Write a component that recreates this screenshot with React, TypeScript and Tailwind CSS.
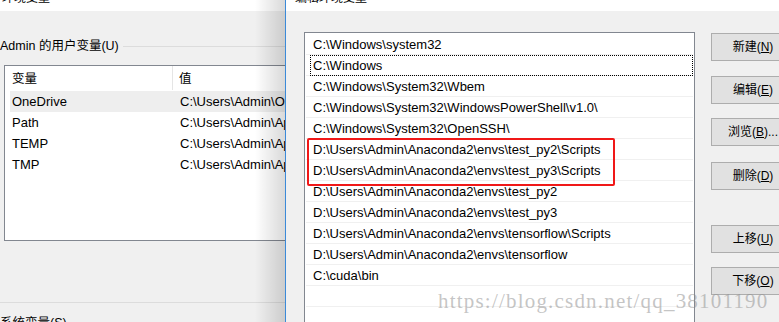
import React from 'react';

const font = 'font-["Liberation_Sans","Noto_Sans_CJK_SC",sans-serif]';

const userVars = [
  { name: 'OneDrive', value: 'C:\\Users\\Admin\\OneDrive', selected: true },
  { name: 'Path', value: 'C:\\Users\\Admin\\AppData' },
  { name: 'TEMP', value: 'C:\\Users\\Admin\\AppData' },
  { name: 'TMP', value: 'C:\\Users\\Admin\\AppData' },
];

const paths = [
  'C:\\Windows\\system32',
  'C:\\Windows',
  'C:\\Windows\\System32\\Wbem',
  'C:\\Windows\\System32\\WindowsPowerShell\\v1.0\\',
  'C:\\Windows\\System32\\OpenSSH\\',
  'D:\\Users\\Admin\\Anaconda2\\envs\\test_py2\\Scripts',
  'D:\\Users\\Admin\\Anaconda2\\envs\\test_py3\\Scripts',
  'D:\\Users\\Admin\\Anaconda2\\envs\\test_py2',
  'D:\\Users\\Admin\\Anaconda2\\envs\\test_py3',
  'D:\\Users\\Admin\\Anaconda2\\envs\\tensorflow\\Scripts',
  'D:\\Users\\Admin\\Anaconda2\\envs\\tensorflow',
  'C:\\cuda\\bin',
  '',
  '',
];

function WinButton({ label, hotkey, suffix = '', className = '' }: { label: string; hotkey: string; suffix?: string; className?: string }) {
  return (
    <div
      className={`w-[84px] h-[28px] shrink-0 flex items-center justify-center bg-[#e1e1e1] border border-[#adadad] text-[12px] text-black ${className}`}
    >
      {label}(<span className="underline">{hotkey}</span>){suffix}
    </div>
  );
}

export default function App() {
  return (
    <div className={`relative w-[779px] h-[322px] flex overflow-hidden bg-[#f0f0f0] ${font}`}>
      {/* Background window: 环境变量 */}
      <div className="relative w-[285px] shrink-0 overflow-hidden">
        <div className="h-[11px] bg-white overflow-hidden">
          <div className="-mt-[10px] pl-[2px] text-[12px] leading-[16px] text-black">环境变量</div>
        </div>

        <div className="mt-[28px] flex items-center h-[14px]">
          <span className="text-[12.5px] whitespace-nowrap text-black">Admin 的用户变量(U)</span>
          <div className="flex-1 ml-[4px] h-px bg-[#dcdcdc]" />
        </div>

        <div className="mt-[12px] ml-[4px] w-[320px] h-[176px] bg-white border border-[#828790]">
          <div className="flex h-[25px] text-[12.5px] text-black">
            <div className="w-[168px] shrink-0 pl-[7px] pt-[4px] border-r border-[#e5e5e5] mb-[1px]">变量</div>
            <div className="pl-[6px] pt-[4px]">值</div>
          </div>
          {userVars.map((v) => (
            <div
              key={v.name}
              className={`flex h-[21px] items-center ml-[5px] text-[13px] text-black whitespace-nowrap ${
                v.selected ? 'bg-[#eeeeee]' : ''
              }`}
            >
              <div className="w-[170px] shrink-0 pl-[2px]">{v.name}</div>
              <div>{v.value}</div>
            </div>
          ))}
        </div>

        <div className="mt-[61px] h-px bg-[#dcdcdc]" />
        <div className="mt-[11px] flex items-center">
          <span className="text-[12.5px] whitespace-nowrap text-black">系统变量(S)</span>
          <div className="flex-1 ml-[4px] h-px bg-[#dcdcdc]" />
        </div>

        {/* drop shadow of the front window */}
        <div className="absolute top-0 right-0 w-[30px] h-full bg-gradient-to-r from-transparent to-black/15" />
      </div>

      {/* Front window: 编辑环境变量 */}
      <div className="flex-1 flex flex-col border-l border-[#3c8ad8] bg-[#f0f0f0] overflow-hidden">
        <div className="h-[11px] bg-white overflow-hidden shrink-0">
          <div className="-mt-[10px] pl-[9px] text-[12px] leading-[16px] text-black">编辑环境变量</div>
        </div>

        <div className="flex pl-[18px]">
          <div className="mt-[21px] w-[391px] h-[300px] shrink-0 bg-white border border-[#828790] pt-[1px] px-px">
            {paths.map((p, i) => (
              <div
                key={i}
                className="relative h-[21px] border-b border-[#f0f0f0] pl-[7px] pt-px text-[13px] leading-[20px] text-black whitespace-nowrap"
              >
                {p}
                {i === 1 && (
                  <span className="absolute left-[4px] right-0 top-0 -bottom-px border border-dotted border-black" />
                )}
              </div>
            ))}
          </div>

          <div className="ml-[16px] flex flex-col">
            <WinButton label="新建" hotkey="N" className="mt-[22px]" />
            <WinButton label="编辑" hotkey="E" className="mt-[15px]" />
            <WinButton label="浏览" hotkey="B" suffix="..." className="mt-[14px]" />
            <WinButton label="删除" hotkey="D" className="mt-[16px]" />
            <WinButton label="上移" hotkey="U" className="mt-[35px]" />
            <WinButton label="下移" hotkey="O" className="mt-[14px]" />
          </div>
        </div>
      </div>

      {/* red highlight annotation */}
      <div className="absolute left-[307px] top-[138px] w-[308px] h-[48px] border-2 border-[#f01818] rounded-[2px]" />

      {/* watermark */}
      <div className='absolute left-[438px] top-[286px] text-[21px] tracking-[1.2px] font-["Liberation_Serif",serif] text-[#8c8c8c]/50 whitespace-nowrap'>
        https://blog.csdn.net/qq_38101190
      </div>
    </div>
  );
}
